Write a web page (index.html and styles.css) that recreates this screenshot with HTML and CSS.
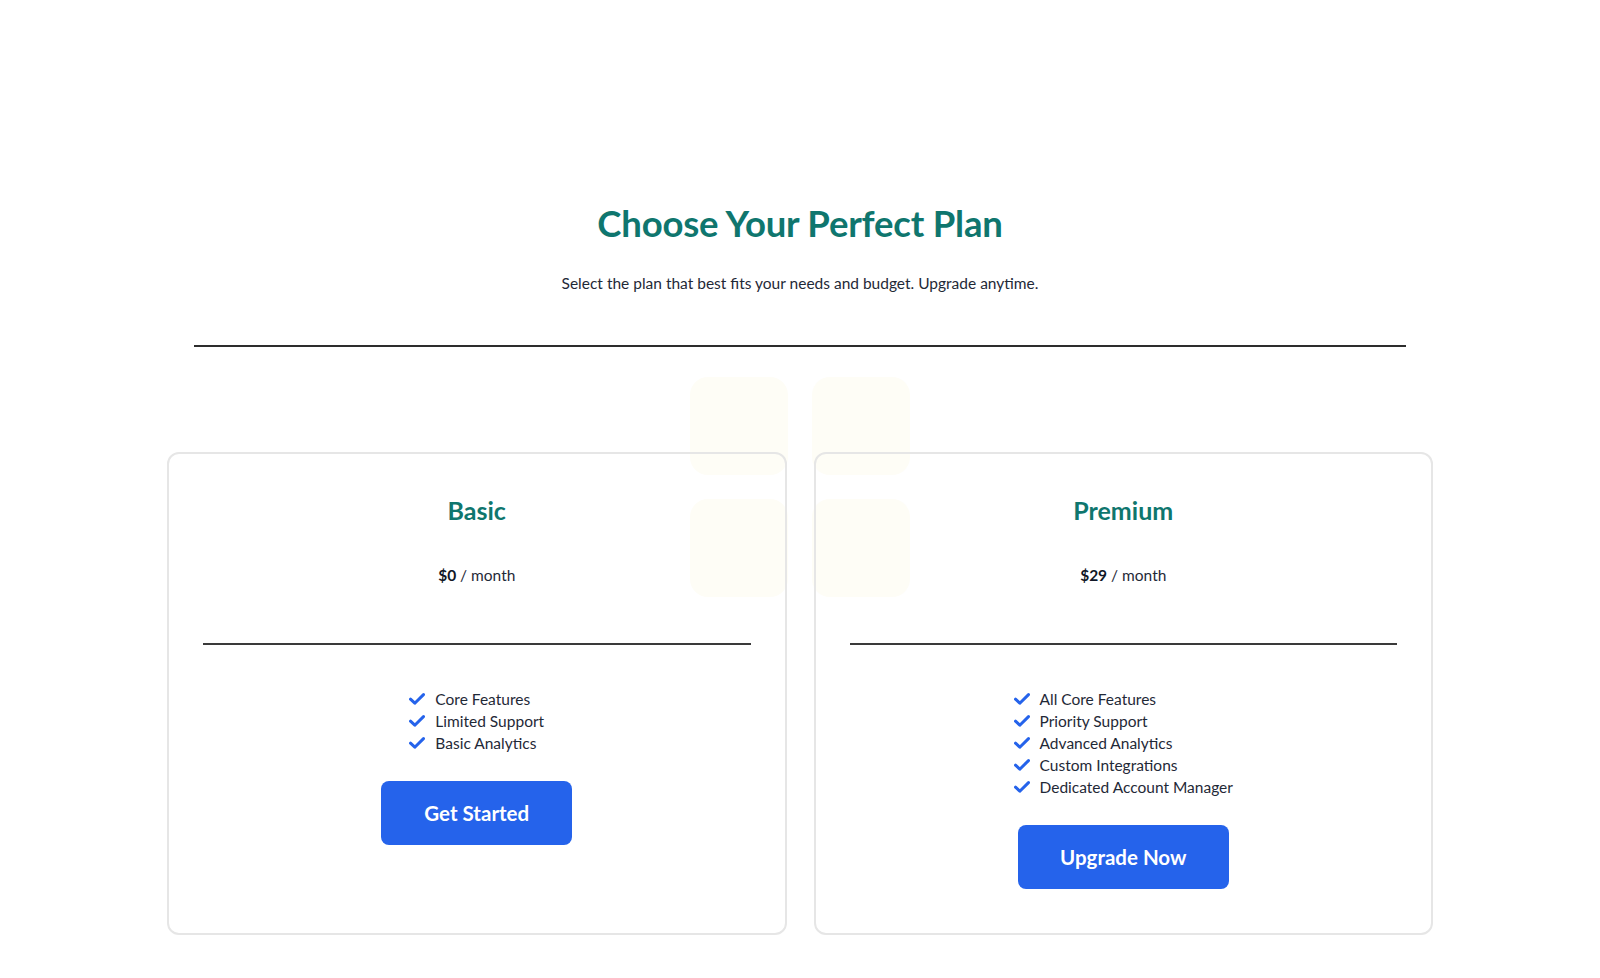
FILE: index.html
```html
<!DOCTYPE html>
<html lang="en">
<head>
<meta charset="utf-8">
<title>Choose Your Perfect Plan</title>
<link rel="stylesheet" href="styles.css">
</head>
<body>
<main class="page">
  <header class="hero">
    <h1 class="hero-title">Choose Your Perfect Plan</h1>
    <p class="hero-sub">Select the plan that best fits your needs and budget. Upgrade anytime.</p>
  </header>
  <hr class="rule">
  <section class="plans">
    <div class="deco" aria-hidden="true">
      <span></span><span></span><span></span><span></span>
    </div>
    <article class="card">
      <h2 class="card-title">Basic</h2>
      <p class="price"><strong>$0</strong> / month</p>
      <hr class="card-rule">
      <ul class="features">
        <li><svg class="check" viewBox="0 0 16 12"><path d="M1.5 6.2 L5.8 10.2 L14.5 1.6"/></svg>Core Features</li>
        <li><svg class="check" viewBox="0 0 16 12"><path d="M1.5 6.2 L5.8 10.2 L14.5 1.6"/></svg>Limited Support</li>
        <li><svg class="check" viewBox="0 0 16 12"><path d="M1.5 6.2 L5.8 10.2 L14.5 1.6"/></svg>Basic Analytics</li>
      </ul>
      <button class="btn btn-basic">Get Started</button>
    </article>
    <article class="card">
      <h2 class="card-title">Premium</h2>
      <p class="price"><strong>$29</strong> / month</p>
      <hr class="card-rule">
      <ul class="features">
        <li><svg class="check" viewBox="0 0 16 12"><path d="M1.5 6.2 L5.8 10.2 L14.5 1.6"/></svg>All Core Features</li>
        <li><svg class="check" viewBox="0 0 16 12"><path d="M1.5 6.2 L5.8 10.2 L14.5 1.6"/></svg>Priority Support</li>
        <li><svg class="check" viewBox="0 0 16 12"><path d="M1.5 6.2 L5.8 10.2 L14.5 1.6"/></svg>Advanced Analytics</li>
        <li><svg class="check" viewBox="0 0 16 12"><path d="M1.5 6.2 L5.8 10.2 L14.5 1.6"/></svg>Custom Integrations</li>
        <li><svg class="check" viewBox="0 0 16 12"><path d="M1.5 6.2 L5.8 10.2 L14.5 1.6"/></svg>Dedicated Account Manager</li>
      </ul>
      <button class="btn btn-premium">Upgrade Now</button>
    </article>
  </section>
</main>
</body>
</html>
```
FILE: styles.css
```css
* { box-sizing: border-box; }
html, body { margin: 0; padding: 0; background: #ffffff; }
body {
  font-family: "Lato", "Noto Sans", sans-serif;
  color: #1f2937;
}
.page {
  width: 1266px;
  margin: 0 auto;
  padding-top: 200px;
  padding-bottom: 40px;
}
.hero { text-align: center; }
.hero-title {
  margin: 0;
  font-size: 36.5px;
  line-height: 46px;
  font-weight: 700;
  color: #0f766e;
  letter-spacing: -0.2px;
}
.hero-sub {
  margin: 26px 0 0;
  font-size: 15.5px;
  line-height: 22px;
  color: #1f2937;
}
.rule {
  margin: 51px 27px 0;
  border: 0;
  height: 2px;
  background: #2d2d2d;
}
.plans {
  position: relative;
  display: grid;
  grid-template-columns: 1fr 1fr;
  gap: 27px;
  margin-top: 105px;
}
.deco {
  position: absolute;
  left: 523px;
  top: -75px;
  display: grid;
  grid-template-columns: 98px 98px;
  grid-template-rows: 98px 98px;
  gap: 24px;
  z-index: 0;
}
.deco span {
  border-radius: 18px;
  background: #fefdf6;
}
.card {
  position: relative;
  z-index: 1;
  border: 2px solid #e6e6e6;
  border-radius: 12px;
  padding: 40px 34px 44px;
  text-align: center;
  display: flex;
  flex-direction: column;
  align-items: center;
}
.card-title {
  margin: 0;
  font-size: 25px;
  line-height: 32px;
  font-weight: 700;
  color: #0f766e;
}
.price {
  margin: 37.5px 0 0;
  font-size: 15.5px;
  line-height: 22px;
  color: #1f2937;
}
.price strong { font-weight: 700; color: #111827; }
.card-rule {
  align-self: stretch;
  margin: 57px 0 0;
  border: 0;
  height: 2px;
  background: #3a3a3a;
}
.features {
  list-style: none;
  margin: 43px 0 0;
  padding: 0;
  text-align: left;
  font-size: 15.5px;
  line-height: 22px;
  color: #1f2937;
}
.features li {
  display: flex;
  align-items: center;
}
.check {
  width: 16px;
  height: 12px;
  margin-right: 10px;
  flex: none;
}
.check path {
  fill: none;
  stroke: #2563eb;
  stroke-width: 3;
  stroke-linecap: round;
  stroke-linejoin: round;
}
.btn {
  margin-top: 27px;
  height: 64px;
  border: 0;
  border-radius: 8px;
  background: #2563eb;
  color: #ffffff;
  font-family: "Lato", "Noto Sans", sans-serif;
  font-size: 20.5px;
  font-weight: 700;
  cursor: pointer;
}
.btn-basic { width: 191px; }
.btn-premium { width: 211px; }
```
